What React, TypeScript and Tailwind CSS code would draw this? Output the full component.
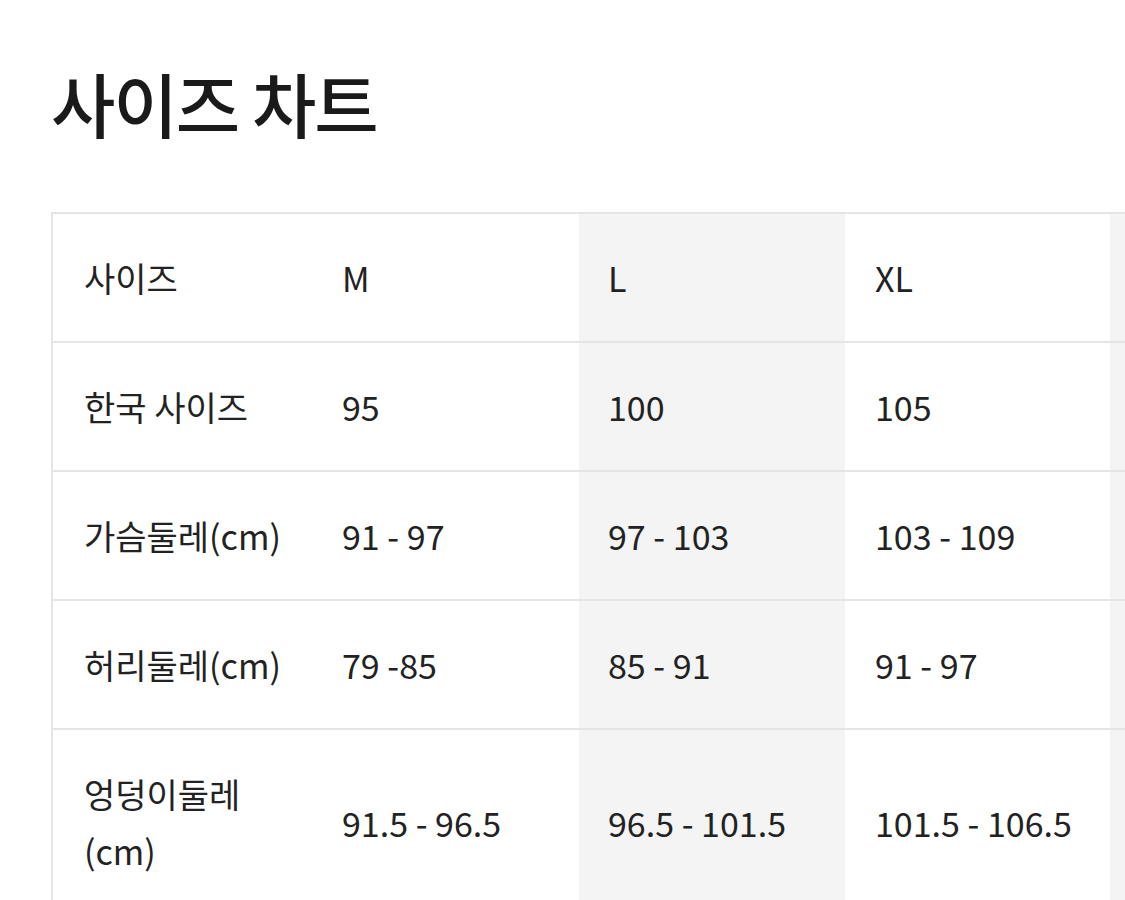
const rows: { label: string; values: string[] }[] = [
  { label: '사이즈', values: ['M', 'L', 'XL', 'XXL'] },
  { label: '한국 사이즈', values: ['95', '100', '105', '110'] },
  { label: '가슴둘레(cm)', values: ['91 - 97', '97 - 103', '103 - 109', '109 - 115'] },
  { label: '허리둘레(cm)', values: ['79 -85', '85 - 91', '91 - 97', '97 - 103'] },
  { label: '엉덩이둘레 (cm)', values: ['91.5 - 96.5', '96.5 - 101.5', '101.5 - 106.5', '106.5 - 111.5'] },
];

const App = () => {
  return (
    <div className="w-[1125px] h-[900px] overflow-hidden bg-white text-[#222] font-['Noto_Sans_CJK_KR','Noto_Sans',sans-serif]">
      <div className="pl-[51px] pt-[68px]">
        <h1 className="text-[70px] font-medium leading-[70px] tracking-[-2px] text-[#1a1a1a]">사이즈 차트</h1>
        <table className="mt-[74px] table-fixed border-collapse border-2 border-[#e5e5e5] w-[1340px] text-[34px] leading-[57px]">
          <colgroup>
            <col className="w-[260px]" />
            <col className="w-[267px]" />
            <col className="w-[266px]" />
            <col className="w-[265px]" />
            <col className="w-[282px]" />
          </colgroup>
          <tbody>
            {rows.map((row, i) => (
              <tr key={i} className="border-b-2 border-[#e5e5e5]">
                <td className="pl-[31px] pr-4 py-[35px] align-middle">
                  {row.label}
                </td>
                {row.values.map((v, j) => (
                  <td
                    key={j}
                    className={
                      j % 2 === 1
                        ? 'pl-[29px] py-[35px] align-middle whitespace-nowrap bg-[#f4f4f4]'
                        : 'pl-[30px] py-[35px] align-middle whitespace-nowrap'
                    }
                  >
                    {v}
                  </td>
                ))}
              </tr>
            ))}
          </tbody>
        </table>
      </div>
    </div>
  );
};

export default App;
